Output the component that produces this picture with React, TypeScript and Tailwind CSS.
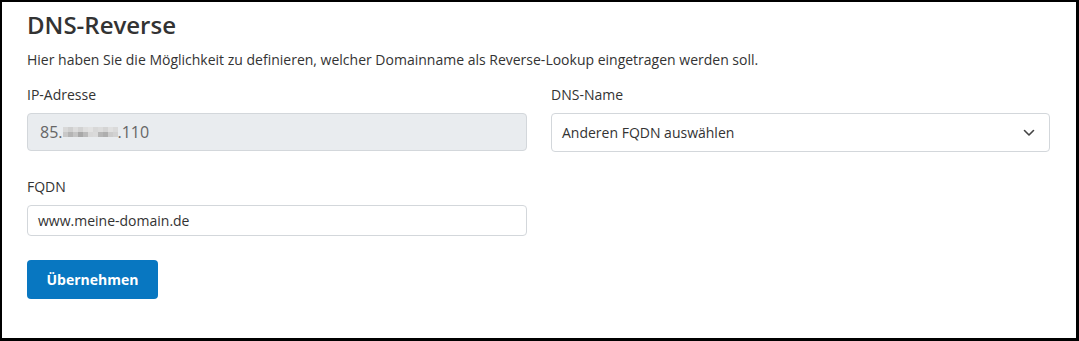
import React from 'react';

const blurCells = [
  ['#d8d8d8', '#cfcfcf', '#dcdcdc', '#d2d2d2', '#dedede', '#e2e2e2', '#d8d8d8', '#dcdcdc', '#d4d4d4', '#e0e0e0', '#dadada'],
  ['#c8c8c8', '#b4b4b4', '#c4c4c4', '#a8a8a8', '#bababa', '#d8d8d8', '#dadada', '#b6b6b6', '#aeaeae', '#cccccc', '#d2d2d2'],
];

function BlurredOctets() {
  return (
    <span className="inline-flex flex-col align-middle">
      {blurCells.map((row, r) => (
        <span key={r} className="flex">
          {row.map((c, i) => (
            <span key={i} className="block h-[5px] w-[5px]" style={{ backgroundColor: c }} />
          ))}
        </span>
      ))}
    </span>
  );
}

export default function App() {
  return (
    <div
      className="w-[1079px] h-[341px] border-l-2 border-t-2 border-r-[3px] border-b-[3px] border-black bg-white pl-[25px] pt-[8px] text-[#333]"
      style={{ fontFamily: '"Open Sans", "Liberation Sans", sans-serif' }}
    >
      {/* Heading */}
      <h2 className="text-[24px] font-semibold leading-[29px] text-[#333]">DNS-Reverse</h2>
      <p className="mt-[11px] text-[14px] leading-[20px]">
        Hier haben Sie die Möglichkeit zu definieren, welcher Domainname als Reverse-Lookup eingetragen werden soll.
      </p>

      {/* Form */}
      <div className="mt-[15px] grid grid-cols-[500px_499px] gap-x-[24px]">
        <div>
          <label className="block text-[14px] leading-[20px] mb-2">IP-Adresse</label>
          <div className="flex h-[38px] items-center rounded-[4px] border border-[#d3d7db] bg-[#e9ecef] pl-[12px] pr-[10px] text-[16px] text-[#666]">
            85.<BlurredOctets />.110
          </div>
        </div>
        <div>
          <label className="block text-[14px] leading-[20px] mb-2">DNS-Name</label>
          <div className="flex h-[39px] items-center justify-between rounded-[4px] border border-[#d3d7db] bg-white pl-[10px] pr-[14px] text-[14px] text-[#333]">
            <span>Anderen FQDN auswählen</span>
            <svg width="12" height="8" viewBox="0 0 12 8" fill="none">
              <path d="M1.5 1.5 6 6l4.5-4.5" stroke="#444" strokeWidth="1.6" strokeLinecap="round" strokeLinejoin="round" />
            </svg>
          </div>
        </div>
      </div>

      <div className="mt-[25px] w-[500px]">
        <label className="block text-[14px] leading-[20px] mb-2">FQDN</label>
        <div className="flex h-[31px] items-center rounded-[4px] border border-[#d3d7db] bg-white px-[10px] text-[14px] text-[#333]">
          www.meine-domain.de
        </div>
      </div>

      <button className="mt-[24px] flex h-[39px] w-[131px] items-center justify-center rounded-[4px] bg-[#0877c1] text-[14px] font-bold text-white">
        Übernehmen
      </button>
    </div>
  );
}
